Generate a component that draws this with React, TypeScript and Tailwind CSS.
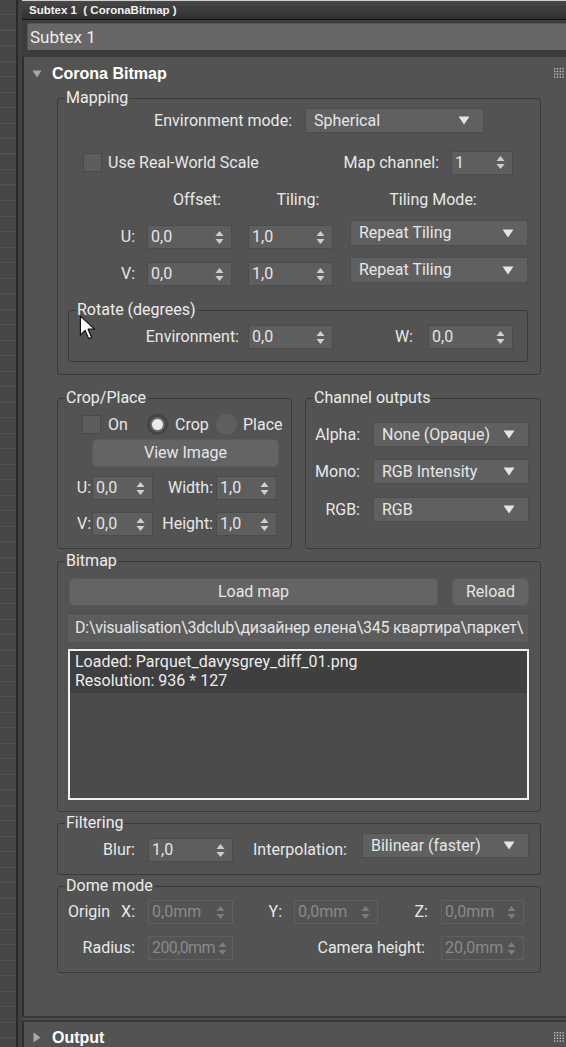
import React from 'react';
import clsx from 'clsx';

// 3ds Max style material editor panel: Corona Bitmap

const Arrows = ({ dim }: { dim?: boolean }) => (
  <svg width="9" height="15" viewBox="0 0 9 15" className="shrink-0">
    <path d="M4.5 1 L8.5 6 H0.5 Z" fill={dim ? '#7c7c7c' : '#d0d0d0'} />
    <path d="M4.5 14 L8.5 9 H0.5 Z" fill={dim ? '#7c7c7c' : '#d0d0d0'} />
  </svg>
);

const DownTri = () => (
  <svg width="12" height="9" viewBox="0 0 12 9" className="shrink-0">
    <path d="M0.5 0.5 H11.5 L6 8.5 Z" fill="#e4e4e4" />
  </svg>
);

function Spinner({ value, className, disabled, tight }: { value: string; className?: string; disabled?: boolean; tight?: boolean }) {
  return (
    <div
      className={clsx(
        'flex h-[24px] items-center overflow-hidden border pl-[3px]',
        tight ? 'pr-[5px]' : 'pr-[7px]',
        disabled ? 'border-[#5f5f5f] text-[#8a8a8a]' : 'border-[#4b4b4b] bg-[#5e5e5e] text-[#e4e4e4]',
        className,
      )}
    >
      <span className={clsx('min-w-0 flex-1 whitespace-nowrap', tight && 'tracking-[-0.6px]')}>{value}</span>
      <Arrows dim={disabled} />
    </div>
  );
}

function Dropdown({ value, className }: { value: string; className?: string }) {
  return (
    <div className={clsx('flex h-[25px] items-center justify-between border border-[#4d4d4d] bg-[#606060] pl-[8px] pr-[13px] text-[#e6e6e6]', className)}>
      <span className="whitespace-nowrap">{value}</span>
      <DownTri />
    </div>
  );
}

function Button({ label, className }: { label: string; className?: string }) {
  return (
    <div className={clsx('flex h-[28px] items-center justify-center rounded-[5px] border border-[#5b5b5b] bg-[#646464] text-[#e6e6e6]', className)}>
      {label}
    </div>
  );
}

const Check = () => <div className="h-[19px] w-[19px] shrink-0 border border-[#484848] bg-[#5d5d5d]" />;

const Radio = ({ on }: { on?: boolean }) => (
  <div
    className={clsx(
      'flex h-[21px] w-[21px] shrink-0 items-center justify-center rounded-full',
      on ? 'border-[3px] border-[#444444] bg-[#6a6a6a]' : 'bg-[#5f5f5f]',
    )}
  >
    {on && <div className="h-[11px] w-[11px] rounded-full bg-[#ececec]" />}
  </div>
);

function Group({ title, className, children }: { title: string; className?: string; children: React.ReactNode }) {
  return (
    <fieldset className={clsx('rounded-[3px] border border-[#393939]', className)}>
      <legend className="ml-[7px] px-[1px] text-[16px] leading-[18px] text-[#ececec]">{title}</legend>
      {children}
    </fieldset>
  );
}

const Grip = () => (
  <svg width="11" height="11" viewBox="0 0 11 11" className="shrink-0">
    {[0, 1, 2, 3].map((r) =>
      [0, 1, 2, 3].map((c) => <rect key={`${r}-${c}`} x={c * 2.8} y={r * 2.8} width="1.4" height="1.4" fill="#bdbdbd" />),
    )}
  </svg>
);

const Cursor = () => (
  <svg width="17" height="26" viewBox="0 0 14 22" className="absolute left-[10px] top-[-4px]">
    <path d="M1 1 L1 17 L5 13 L8 20 L10.5 19 L7.5 12 L13 12 Z" fill="#ffffff" stroke="#111111" strokeWidth="1" strokeLinejoin="round" />
  </svg>
);

export default function App() {
  return (
    <div className="flex h-[1047px] w-[566px] overflow-hidden bg-[#535353] font-['Roboto',sans-serif] text-[16px] leading-[20px] text-[#e8e8e8]">
      {/* left list strip */}
      <div className="w-[16px] shrink-0 bg-[repeating-linear-gradient(to_bottom,#464646_0px,#464646_14px,#515151_14px,#515151_15.5px)]" />
      <div className="w-[2px] shrink-0 bg-[#2a2a2a]" />
      <div className="w-[4px] shrink-0 bg-[#414141]" />

      <div className="flex min-w-0 flex-1 flex-col">
        {/* title bar */}
        <div className="flex h-[20px] shrink-0 items-center border-t border-[#cfcfcf] border-b border-b-[#151515] bg-[linear-gradient(to_bottom,#484848,#303030)] pl-[7px] font-['Liberation_Sans',sans-serif] text-[11.5px] font-bold text-[#f2f2f2]">
          <span className="whitespace-pre">Subtex 1  ( CoronaBitmap )</span>
        </div>
        {/* name field */}
        <div className="flex h-[37px] shrink-0 flex-col bg-[#3c3c3c] pl-[5px] pt-[3px]">
          <div className="flex h-[27px] items-center border-t border-l border-[#555555] bg-[#676767] pl-[2px] text-[17px] text-[#ececec]">
            Subtex 1
          </div>
        </div>

        {/* Corona Bitmap rollout */}
        <div className="flex min-h-0 flex-1 flex-col border-l-2 border-[#2e2e2e]">
          <div className="flex h-[32px] shrink-0 items-center pl-[8px] pr-[1px] pt-[1px]">
            <svg width="10" height="8" viewBox="0 0 10 8" className="shrink-0">
              <path d="M0.5 0.5 H9.5 L5 7.5 Z" fill="#a8a8a8" />
            </svg>
            <span className="ml-[10px] font-['Liberation_Sans',sans-serif] text-[16px] font-bold text-[#ffffff]">Corona Bitmap</span>
            <div className="flex-1" />
            <Grip />
          </div>

          <div className="flex flex-col pl-[33px]">
            {/* Mapping */}
            <Group title="Mapping" className="w-[484px] pb-[12px]">
              <div className="mt-[1px] flex items-center">
                <div className="w-[234px] text-right">Environment mode:</div>
                <Dropdown value="Spherical" className="ml-[13px] w-[179px]" />
              </div>
              <div className="mt-[17px] flex h-[25px] items-center">
                <div className="ml-[25px] flex w-[243px] items-center">
                  <Check />
                  <span className="ml-[6px]">Use Real-World Scale</span>
                </div>
                <div className="w-[113px] text-right">Map channel:</div>
                <Spinner value="1" className="ml-[12px] w-[62px]" />
              </div>
              <div className="mt-[15px] flex h-[20px] items-center">
                <div className="ml-[89px] w-[100px] text-center">Offset:</div>
                <div className="ml-[1px] w-[100px] text-center">Tiling:</div>
                <div className="w-[170px] text-center">Tiling Mode:</div>
              </div>
              {['U:', 'V:'].map((axis, i) => (
                <div key={axis} className={clsx('flex items-start', i === 0 ? 'mt-[10px]' : 'mt-[8px]')}>
                  <div className="mt-[5px] flex h-[24px] w-[77px] items-center justify-end">{axis}</div>
                  <Spinner value="0,0" className="ml-[12px] mt-[5px] w-[85px]" />
                  <Spinner value="1,0" className="ml-[16px] mt-[5px] w-[85px]" />
                  <Dropdown value="Repeat Tiling" className="ml-[17px] h-[26px] w-[178px]" />
                </div>
              ))}

              <Group title="Rotate (degrees)" className="relative ml-[10px] mt-[15px] w-[460px] pb-[12px]">
                <Cursor />
                <div className="mt-[6px] flex items-center">
                  <div className="w-[170px] text-right">Environment:</div>
                  <Spinner value="0,0" className="ml-[9px] w-[85px]" />
                  <div className="w-[80px] text-right">W:</div>
                  <Spinner value="0,0" className="ml-[15px] w-[85px]" />
                </div>
              </Group>
            </Group>

            {/* Crop/Place + Channel outputs */}
            <div className="mt-[14px] flex items-stretch">
              <Group title="Crop/Place" className="w-[235px] pb-[12px]">
                <div className="mt-[8px] flex h-[19px] items-center">
                  <div className="ml-[24px] flex w-[65px] items-center">
                    <Check />
                    <span className="ml-[7px]">On</span>
                  </div>
                  <div className="flex w-[69px] items-center">
                    <Radio on />
                    <span className="ml-[7px]">Crop</span>
                  </div>
                  <Radio />
                  <span className="ml-[6px]">Place</span>
                </div>
                <Button label="View Image" className="ml-[34px] mt-[5px] w-[187px]" />
                {[
                  ['U:', 'Width:'],
                  ['V:', 'Height:'],
                ].map(([a, b], i) => (
                  <div key={a} className={clsx('flex items-center', i === 0 ? 'mt-[9px]' : 'mt-[12px]')}>
                    <div className="w-[33px] text-right">{a}</div>
                    <Spinner value="0,0" className="ml-[1px] w-[61px]" />
                    <div className="w-[60px] text-right">{b}</div>
                    <Spinner value="1,0" className="ml-[3px] w-[61px]" />
                  </div>
                ))}
              </Group>

              <Group title="Channel outputs" className="ml-[13px] w-[236px]">
                {[
                  ['Alpha:', 'None (Opaque)', 'mt-[15px]'],
                  ['Mono:', 'RGB Intensity', 'mt-[12px]'],
                  ['RGB:', 'RGB', 'mt-[13px]'],
                ].map(([label, value, mt]) => (
                  <div key={label} className={clsx('flex items-center', mt)}>
                    <div className="w-[54px] text-right">{label}</div>
                    <Dropdown value={value} className="ml-[13px] w-[156px]" />
                  </div>
                ))}
              </Group>
            </div>

            {/* Bitmap */}
            <Group title="Bitmap" className="mt-[3px] w-[484px] pb-[11px]">
              <div className="mt-[8px] flex">
                <Button label="Load map" className="ml-[11px] w-[369px]" />
                <Button label="Reload" className="ml-[14px] w-[77px]" />
              </div>
              <div className="ml-[10px] mt-[7px] flex h-[29px] w-[460px] items-center overflow-hidden border-t border-[#4a4a4a] bg-[#5c5c5c] pl-[7px] text-[#e4e4e4]">
                <span className="whitespace-nowrap tracking-[-0.25px]">D:\visualisation\3dclub\дизайнер елена\345 квартира\паркет\</span>
              </div>
              <div className="ml-[10px] mt-[7px] h-[151px] w-[461px] border-2 border-[#f0f0f0] bg-[#4b4b4b]">
                <div className="bg-[#3f3f3f] px-[5px] pt-[1px] pb-[3px] leading-[19px] text-[#ececec]">
                  <div>Loaded: Parquet_davysgrey_diff_01.png</div>
                  <div>Resolution: 936 * 127</div>
                </div>
              </div>
            </Group>

            {/* Filtering */}
            <Group title="Filtering" className="mt-[2px] w-[484px] pb-[12px]">
              <div className="mt-[1px] flex items-start">
                <div className="mt-[5px] flex h-[24px] w-[77px] items-center justify-end">Blur:</div>
                <Spinner value="1,0" className="ml-[13px] mt-[5px] w-[85px]" />
                <div className="mt-[5px] flex h-[24px] w-[114px] items-center justify-end">Interpolation:</div>
                <Dropdown value="Bilinear (faster)" className="ml-[15px] w-[167px]" />
              </div>
            </Group>

            {/* Dome mode */}
            <Group title="Dome mode" className="mt-[2px] w-[484px] pb-[12px]">
              <div className="mt-[5px] flex items-center">
                <div className="flex w-[77px] justify-between pl-[10px]">
                  <span>Origin</span>
                  <span>X:</span>
                </div>
                <Spinner disabled value="0,0mm" className="ml-[13px] w-[85px]" />
                <div className="w-[49px] text-right">Y:</div>
                <Spinner disabled value="0,0mm" className="ml-[12px] w-[84px]" />
                <div className="w-[50px] text-right">Z:</div>
                <Spinner disabled value="0,0mm" className="ml-[13px] w-[83px]" />
              </div>
              <div className="mt-[12px] flex items-center">
                <div className="w-[77px] text-right">Radius:</div>
                <Spinner disabled tight value="200,0mm" className="ml-[13px] w-[85px]" />
                <div className="w-[192px] text-right">Camera height:</div>
                <Spinner disabled value="20,0mm" className="ml-[16px] w-[83px]" />
              </div>
            </Group>
          </div>
        </div>

        {/* rollout separators */}
        <div className="h-[2px] shrink-0 bg-[#3a3a3a]" />
        <div className="h-[2px] shrink-0 bg-[#4c4c4c]" />
        <div className="h-[2px] shrink-0 bg-[#393939]" />

        {/* Output rollout header */}
        <div className="flex h-[25px] shrink-0 items-center border-l-2 border-[#2e2e2e] pl-[8px] pr-[1px] pt-[6px]">
          <svg width="8" height="11" viewBox="0 0 8 11" className="ml-[1px] shrink-0">
            <path d="M0.5 0.5 L7.5 5.5 L0.5 10.5 Z" fill="#a8a8a8" />
          </svg>
          <span className="ml-[11px] font-['Liberation_Sans',sans-serif] text-[16px] font-bold text-[#ffffff]">Output</span>
          <div className="flex-1" />
          <Grip />
        </div>
      </div>
    </div>
  );
}
